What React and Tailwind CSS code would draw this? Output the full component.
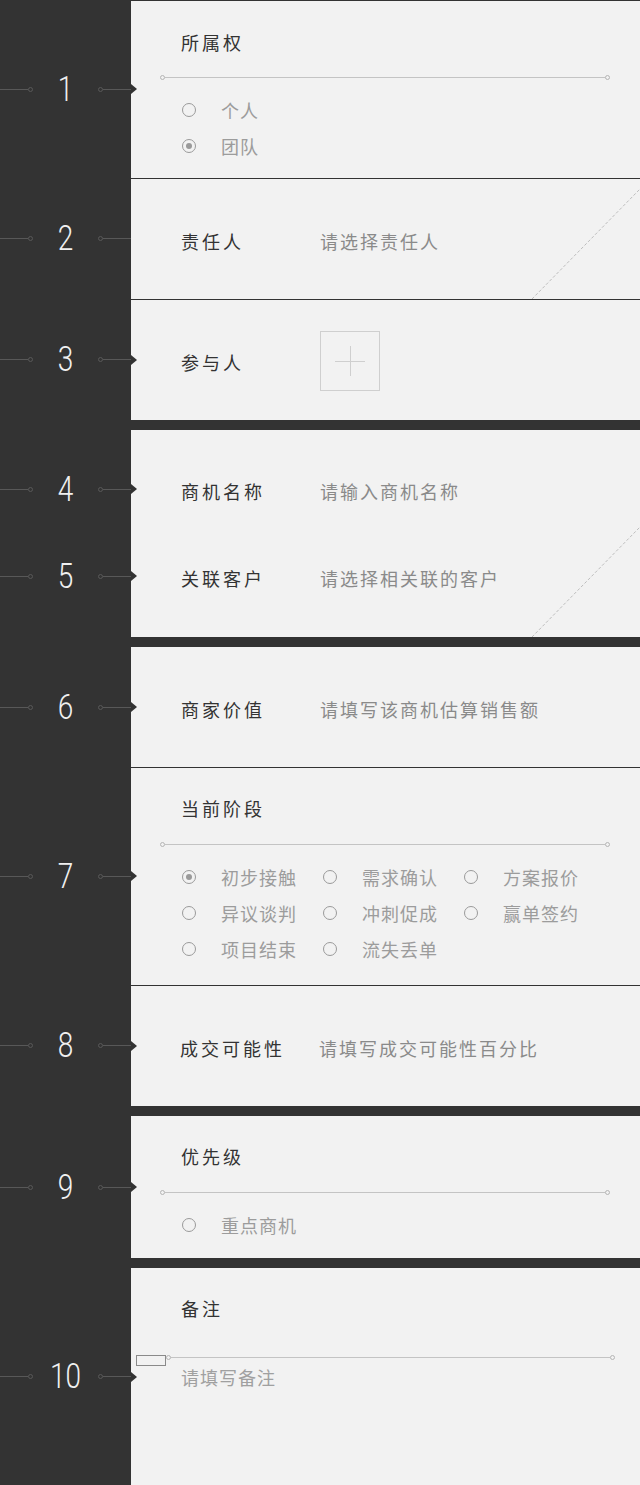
import React from "react";

const cjk = { fontFamily: '"Noto Sans CJK SC", "Noto Sans", sans-serif' };

const Marker = ({ n }) => (
  <div className="w-[131px] shrink-0 flex items-center relative">
    <div className="w-[28px] h-px bg-[#585858]" />
    <div className="w-[5px] h-[5px] rounded-full border border-[#585858]" />
    <div
      className="flex-1 text-center text-[35px] leading-none font-light text-[#f0f0f0] scale-x-80"
      style={{ fontFamily: "Roboto, sans-serif" }}
    >
      {n}
    </div>
    <div className="w-[5px] h-[5px] rounded-full border border-[#585858]" />
    <div className="w-[28px] h-px bg-[#585858]" />
    <div className="absolute right-[-6px] top-1/2 -translate-y-1/2 w-0 h-0 border-l-[6px] border-l-[#333] border-y-[5px] border-y-transparent" />
  </div>
);

const Rule = () => (
  <div className="ml-[29px] w-[450px] h-[5px] flex items-center">
    <div className="w-[5px] h-[5px] rounded-full border border-[#b5b5b5]" />
    <div className="flex-1 h-px bg-[#c4c4c4]" />
    <div className="w-[5px] h-[5px] rounded-full border border-[#b5b5b5]" />
  </div>
);

const Radio = ({ label, checked }) => (
  <div className="w-[141px] h-[36px] flex items-center">
    <div className="w-[14px] h-[14px] rounded-full border border-[#9a9a9a] flex items-center justify-center">
      {checked && <div className="w-[6px] h-[6px] rounded-full bg-[#9a9a9a]" />}
    </div>
    <span className="ml-[25px] text-[18px] tracking-[1px] text-[#9c9c9c] whitespace-nowrap">{label}</span>
  </div>
);

const Title = ({ children }) => (
  <div className="pl-[50px] h-[26px] leading-[26px] text-[18px] tracking-[3px] text-[#333]">{children}</div>
);

const FieldRow = ({ label, placeholder, children, labelClass = "" }) => (
  <div className="flex items-center pl-[50px] pt-[5px] h-full">
    <div className={`w-[139px] text-[18px] tracking-[3px] text-[#333] whitespace-nowrap ${labelClass}`}>{label}</div>
    {placeholder && <div className="text-[18px] tracking-[2px] text-[#8a8a8a] whitespace-nowrap">{placeholder}</div>}
    {children}
  </div>
);

const Diagonal = () => (
  <svg className="absolute right-0 bottom-0" width="108" height="110" viewBox="0 0 108 110">
    <line x1="0" y1="110" x2="108" y2="0" stroke="#bdbdbd" strokeWidth="1" strokeDasharray="3 2" />
  </svg>
);

const stages = ["初步接触", "需求确认", "方案报价", "异议谈判", "冲刺促成", "赢单签约", "项目结束", "流失丢单"];

export default function App() {
  return (
    <div className="w-[640px] min-h-[1485px] bg-[#333] flex flex-col" style={cjk}>
      {/* 1 */}
      <div className="flex h-[178px]">
        <Marker n="1" />
        <div className="flex-1 bg-[#f2f2f2] border-t border-[#333] pt-[28px]">
          <Title>所属权</Title>
          <div className="mt-[20px]"><Rule /></div>
          <div className="mt-[12px] pl-[51px]">
            <Radio label="个人" />
            <Radio label="团队" checked />
          </div>
        </div>
      </div>

      {/* 2 */}
      <div className="flex h-[121px]">
        <Marker n="2" />
        <div className="flex-1 bg-[#f2f2f2] border-t border-[#333] relative">
          <FieldRow label="责任人" placeholder="请选择责任人" />
          <Diagonal />
        </div>
      </div>

      {/* 3 */}
      <div className="flex h-[121px]">
        <Marker n="3" />
        <div className="flex-1 bg-[#f2f2f2] border-t border-[#333]">
          <FieldRow label="参与人">
            <div className="w-[60px] h-[60px] border border-[#cfcfcf] relative flex items-center justify-center -mt-[3px]">
              <div className="absolute w-[30px] h-px bg-[#cfcfcf]" />
              <div className="absolute h-[30px] w-px bg-[#cfcfcf]" />
            </div>
          </FieldRow>
        </div>
      </div>

      {/* 4 / 5 */}
      <div className="mt-[10px] relative">
        <div className="flex h-[118px]">
          <Marker n="4" />
          <div className="flex-1 bg-[#f2f2f2]">
            <FieldRow label="商机名称" placeholder="请输入商机名称" />
          </div>
        </div>
        <div className="flex h-[89px]">
          <div className="flex pb-[33px]">
            <Marker n="5" />
          </div>
          <div className="flex-1 bg-[#f2f2f2] pb-[33px]">
            <FieldRow label="关联客户" placeholder="请选择相关联的客户" />
          </div>
        </div>
        <Diagonal />
      </div>

      {/* 6 */}
      <div className="flex h-[120px] mt-[10px]">
        <Marker n="6" />
        <div className="flex-1 bg-[#f2f2f2]">
          <FieldRow label="商家价值" placeholder="请填写该商机估算销售额" />
        </div>
      </div>

      {/* 7 */}
      <div className="flex h-[218px]">
        <Marker n="7" />
        <div className="flex-1 bg-[#f2f2f2] border-t border-[#333] pt-[27px]">
          <Title>当前阶段</Title>
          <div className="mt-[21px]"><Rule /></div>
          <div className="mt-[12px] pl-[51px] grid grid-cols-[141px_141px_141px]">
            {stages.map((s, i) => (
              <Radio key={s} label={s} checked={i === 0} />
            ))}
          </div>
        </div>
      </div>

      {/* 8 */}
      <div className="flex h-[121px]">
        <Marker n="8" />
        <div className="flex-1 bg-[#f2f2f2] border-t border-[#333]">
          <FieldRow label="成交可能性" placeholder="请填写成交可能性百分比" labelClass="-ml-px" />
        </div>
      </div>

      {/* 9 */}
      <div className="flex h-[142px] mt-[10px]">
        <Marker n="9" />
        <div className="flex-1 bg-[#f2f2f2] pt-[27px]">
          <Title>优先级</Title>
          <div className="mt-[21px]"><Rule /></div>
          <div className="mt-[12px] pl-[51px]">
            <Radio label="重点商机" />
          </div>
        </div>
      </div>

      {/* 10 */}
      <div className="flex h-[217px] mt-[10px]">
        <Marker n="10" />
        <div className="flex-1 bg-[#f2f2f2] pt-[27px]">
          <Title>备注</Title>
          <div className="mt-[34px] ml-[5px] flex items-start">
            <div className="w-[30px] h-[11px] border border-[#8a8a8a]" />
            <div className="w-[449px] h-[5px] flex items-center">
              <div className="w-[5px] h-[5px] rounded-full border border-[#b5b5b5]" />
              <div className="flex-1 h-px bg-[#c4c4c4]" />
              <div className="w-[5px] h-[5px] rounded-full border border-[#b5b5b5]" />
            </div>
          </div>
          <div className="pl-[50px] h-[22px] leading-[22px] text-[18px] tracking-[1px] text-[#a0a0a0]">请填写备注</div>
        </div>
      </div>
    </div>
  );
}
